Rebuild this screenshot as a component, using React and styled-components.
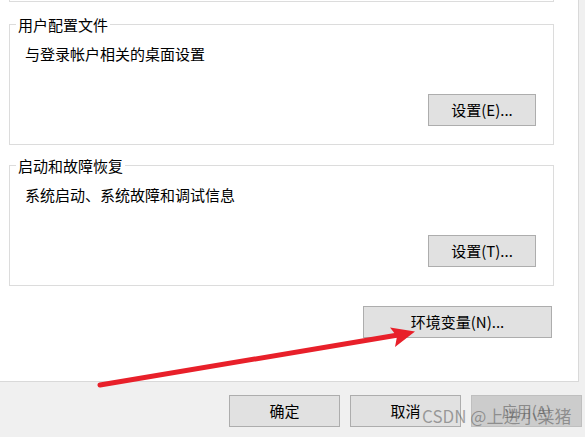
import React from "react";
import styled, { createGlobalStyle } from "styled-components";

const GlobalStyle = createGlobalStyle`
  html, body { margin: 0; padding: 0; }
  body {
    font-family: "Noto Sans CJK SC", "Noto Sans", sans-serif;
    background: #f0f0f0;
  }
`;

const Dialog = styled.div`
  position: relative;
  width: 585px;
  height: 437px;
  display: flex;
  flex-direction: column;
  background: #f0f0f0;
  overflow: hidden;
  font-size: 15px;
  color: #000;
`;

const TabPage = styled.div`
  width: 579px;
  height: 382px;
  box-sizing: border-box;
  background: #fff;
  border-right: 1px solid #d9d9d9;
  border-bottom: 1px solid #d9d9d9;
  padding: 0 24px 0 9px;
  display: flex;
  flex-direction: column;
`;

const GroupTail = styled.div`
  height: 2px;
  box-sizing: border-box;
  border: 1px solid #dcdcdc;
  border-top: none;
`;

const Group = styled.fieldset`
  margin: ${(p) => p.$top}px 0 0;
  padding: 0;
  border: 1px solid #dcdcdc;
  min-width: 0;
`;

const Legend = styled.legend`
  margin-left: 6px;
  padding: 0 2px;
  font-size: 15px;
  line-height: 21px;
`;

const GroupBody = styled.div`
  display: flex;
  flex-direction: column;
  padding: 9px 17px 18px 15px;
`;

const Desc = styled.div`
  line-height: 20px;
`;

const Button = styled.button`
  box-sizing: border-box;
  width: ${(p) => p.$w}px;
  height: 32px;
  padding: 0;
  margin: 0;
  font-family: inherit;
  font-size: 15px;
  line-height: 20px;
  color: ${(p) => (p.disabled ? "#8a8a8a" : "#000")};
  background: ${(p) => (p.disabled ? "#cccccc" : "#e1e1e1")};
  border: 1px solid ${(p) => (p.disabled ? "#bfbfbf" : "#adadad")};
  border-radius: 0;
`;

const GroupButton = styled(Button)`
  align-self: flex-end;
  margin-top: 30px;
`;

const EnvRow = styled.div`
  display: flex;
  justify-content: flex-end;
  margin-top: 20px;
  padding-right: 2px;
`;

const Footer = styled.div`
  flex: 1;
  display: flex;
  justify-content: flex-end;
  align-items: flex-start;
  gap: 10px;
  padding: 13px 3px 0 0;
`;

const Watermark = styled.div`
  position: absolute;
  left: 422px;
  top: 405px;
  font-size: 17px;
  line-height: 22px;
  color: rgba(80, 80, 80, 0.5);
  white-space: nowrap;
  pointer-events: none;
`;

const ArrowLayer = styled.svg`
  position: absolute;
  left: 0;
  top: 0;
  pointer-events: none;
`;

function Arrow() {
  return (
    <ArrowLayer width="585" height="437" viewBox="0 0 585 437">
      <line
        x1="100"
        y1="385"
        x2="398"
        y2="335"
        stroke="#e8202a"
        strokeWidth="5"
        strokeLinecap="round"
      />
      <path d="M415 331.5 L390 327.5 L397 336.5 L395 347 Z" fill="#e8202a" />
    </ArrowLayer>
  );
}

export default function App() {
  return (
    <>
      <GlobalStyle />
      <Dialog>
        <TabPage>
          <GroupTail />
          <Group $top={12}>
            <Legend>用户配置文件</Legend>
            <GroupBody>
              <Desc>与登录帐户相关的桌面设置</Desc>
              <GroupButton $w={108}>设置(E)...</GroupButton>
            </GroupBody>
          </Group>
          <Group $top={10}>
            <Legend>启动和故障恢复</Legend>
            <GroupBody>
              <Desc>系统启动、系统故障和调试信息</Desc>
              <GroupButton $w={108}>设置(T)...</GroupButton>
            </GroupBody>
          </Group>
          <EnvRow>
            <Button $w={189}>环境变量(N)...</Button>
          </EnvRow>
        </TabPage>
        <Footer>
          <Button $w={111}>确定</Button>
          <Button $w={111}>取消</Button>
          <Button $w={111} disabled>
            应用(A)
          </Button>
        </Footer>
        <Arrow />
        <Watermark>CSDN @上进小菜猪</Watermark>
      </Dialog>
    </>
  );
}
